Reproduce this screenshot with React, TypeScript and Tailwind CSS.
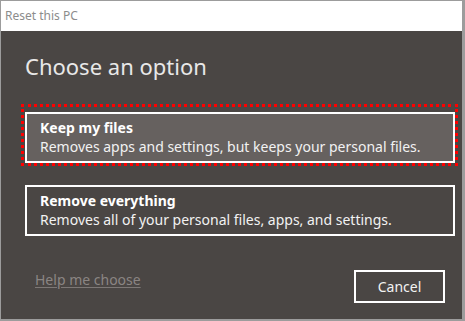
const font = { fontFamily: '"Segoe UI", "Noto Sans", "Open Sans", sans-serif' };

const OptionBox = ({ title, text, selected }: { title: string; text: string; selected?: boolean }) => (
  <div className="relative w-[430px]">
    {selected && (
      <div className="pointer-events-none absolute -left-[4px] -top-[8px] -right-[3px] -bottom-[3px] border-[3px] border-dotted border-[#ff0000]" />
    )}
    <div
      className={`flex flex-col h-[51px] border-2 border-white pl-[13px] pt-[4px] ${
        selected ? "bg-[#66615f]" : "bg-transparent"
      }`}
    >
      <p className="text-[14px] leading-[19px] font-bold text-white">{title}</p>
      <p className="text-[14px] leading-[19px] text-[#f2f2f2]">{text}</p>
    </div>
  </div>
);

export default function App() {
  return (
    <div
      style={font}
      className="w-[465px] h-[321px] flex flex-col border-t border-l border-b-2 border-r-[3px] border-[#9c9c9c] bg-[#4a4644] overflow-hidden"
    >
      {/* title bar */}
      <div className="h-[30px] bg-white flex items-center pl-[4px] shrink-0">
        <span className="text-[12px] text-[#8c8c8c]">Reset this PC</span>
      </div>

      <div className="flex flex-col flex-1 pl-[24px]">
        <h1 className="text-[22px] leading-[30px] text-[#e8e8e8] mt-[20px] mb-[31px]">Choose an option</h1>

        <div className="flex flex-col gap-[22px]">
          <OptionBox
            selected
            title="Keep my files"
            text="Removes apps and settings, but keeps your personal files."
          />
          <OptionBox
            title="Remove everything"
            text="Removes all of your personal files, apps, and settings."
          />
        </div>

        <div className="flex items-start justify-between mt-[34px] pr-[17px]">
          <a className="ml-[10px] mt-[-1px] text-[14px] text-[#8a8583] underline underline-offset-2 decoration-[#7d7876]">
            Help me choose
          </a>
          <button className="w-[91px] h-[33px] border-2 border-white text-[14px] text-[#f2f2f2]">
            Cancel
          </button>
        </div>
      </div>
    </div>
  );
}
